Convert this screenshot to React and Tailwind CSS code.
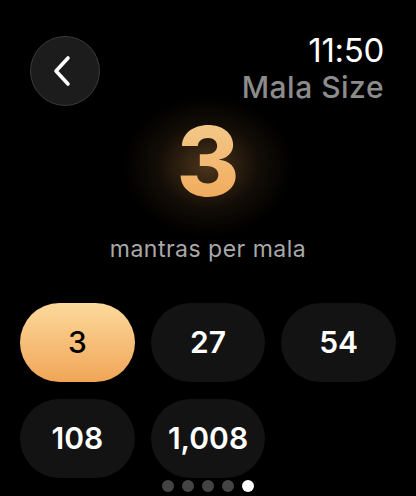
const SIZES = ['3', '27', '54', '108', '1,008'];

export default function App() {
  const selected = '3';

  return (
    <div className="flex h-[496px] w-[416px] flex-col overflow-hidden bg-black text-white" style={{ fontFamily: 'Inter, "Noto Sans", sans-serif' }}>
      <div className="flex items-start justify-between pl-[30px] pr-[32px] pt-[36px]">
        <button className="flex h-[70px] w-[70px] items-center justify-center rounded-full border border-[#3a3a3a] bg-[#1c1c1c]">
          <svg className="-ml-[6px] h-[32px] w-[20px]" viewBox="0 0 20 32" fill="none" stroke="white" strokeWidth={3.6} strokeLinecap="round" strokeLinejoin="round">
            <path d="M16 3 L4 16 L16 29" />
          </svg>
        </button>
        <div className="-mt-[5px] flex flex-col items-end">
          <span className="text-[33px] leading-[38px] tracking-[-0.3px]">11:50</span>
          <span className="mt-[1px] text-[30px] font-medium leading-[34px] tracking-[0.5px] text-[#8c8c8c]">Mala Size</span>
        </div>
      </div>

      <div className="relative flex justify-center">
        <div className="absolute -top-[10px] h-[140px] w-[170px] rounded-full bg-[radial-gradient(closest-side,rgba(240,165,85,0.32),rgba(240,165,85,0.08)_60%,transparent)]" />
        <span className="relative bg-gradient-to-b from-[#f3cf92] to-[#f0a452] bg-clip-text text-[96px] font-extrabold leading-[110px] text-transparent">
          3
        </span>
      </div>

      <p className="mt-[19px] text-center text-[23px] leading-[28px] tracking-[0.5px] text-[#a9a9a9]">mantras per mala</p>

      <div className="mt-[40px] grid grid-cols-3 gap-x-[16px] gap-y-[17px] px-[20px]">
        {SIZES.map((s) => (
          <button
            key={s}
            className={`flex h-[79px] items-center justify-center rounded-full text-[30px] ${
              s === selected
                ? 'bg-gradient-to-b from-[#fcd99b] to-[#f0a556] font-medium text-black'
                : 'bg-[#131313] font-semibold text-white'
            }`}
          >
            {s}
          </button>
        ))}
      </div>

      <div className="mt-[2px] flex justify-center gap-[8px]">
        {[0, 1, 2, 3, 4].map((i) => (
          <span key={i} className={`h-[12px] w-[12px] rounded-full ${i === 4 ? 'bg-white' : 'bg-[#444444]'}`} />
        ))}
      </div>
    </div>
  );
}
